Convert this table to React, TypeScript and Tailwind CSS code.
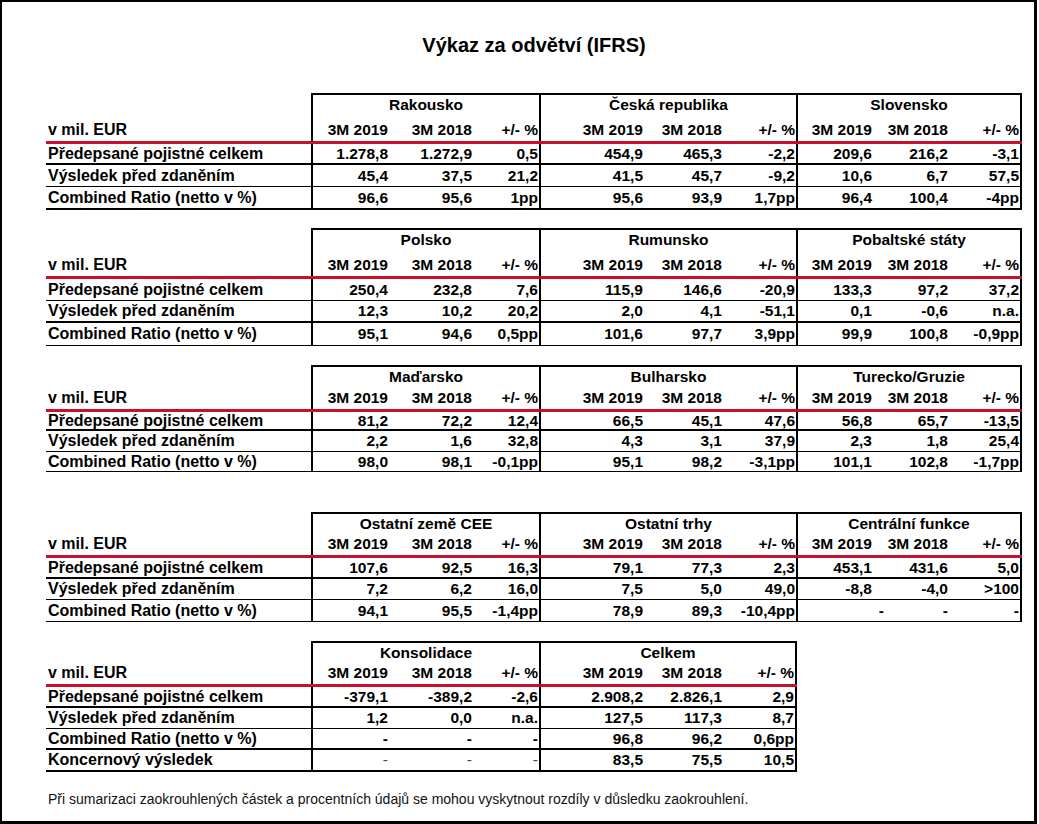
type Group = { box: string; cols: string[] };

const threeGroups: Group[] = [
  { box: "w-[228px] border-l-2", cols: ["w-[77px]", "w-[84px]", "w-[65px]"] },
  { box: "w-[257px] border-l-2", cols: ["w-[104px]", "w-[79px]", "w-[72px]"] },
  { box: "w-[226px] border-l-2 border-r-2", cols: ["w-[76px]", "w-[76px]", "w-[70px]"] },
];

const twoGroups: Group[] = [
  { box: "w-[228px] border-l-2", cols: ["w-[77px]", "w-[84px]", "w-[65px]"] },
  { box: "w-[258px] border-l-2 border-r-2", cols: ["w-[104px]", "w-[79px]", "w-[71px]"] },
];

type Row = { label: string; values: string[]; cls: string; light?: number[]; shift?: number[] };

type Block = {
  top: string;
  header: string;
  groups: Group[];
  names: string[];
  rows: Row[];
};

const L1 = "Předepsané pojistné celkem";
const L2 = "Výsledek před zdaněním";
const L3 = "Combined Ratio (netto v %)";

const blocks: Block[] = [
  {
    top: "mt-[36px]",
    header: "h-[48px]",
    groups: threeGroups,
    names: ["Rakousko", "Česká republika", "Slovensko"],
    rows: [
      { label: L1, cls: "h-[21px] border-b-2", values: ["1.278,8", "1.272,9", "0,5", "454,9", "465,3", "-2,2", "209,6", "216,2", "-3,1"] },
      { label: L2, cls: "h-[22px] border-b", values: ["45,4", "37,5", "21,2", "41,5", "45,7", "-9,2", "10,6", "6,7", "57,5"] },
      { label: L3, cls: "h-[23px] border-b-2", values: ["96,6", "95,6", "1pp", "95,6", "93,9", "1,7pp", "96,4", "100,4", "-4pp"] },
    ],
  },
  {
    top: "mt-[18px]",
    header: "h-[48px]",
    groups: threeGroups,
    names: ["Polsko", "Rumunsko", "Pobaltské státy"],
    rows: [
      { label: L1, cls: "h-[22px] border-b", values: ["250,4", "232,8", "7,6", "115,9", "146,6", "-20,9", "133,3", "97,2", "37,2"] },
      { label: L2, cls: "h-[22px] border-b-2", values: ["12,3", "10,2", "20,2", "2,0", "4,1", "-51,1", "0,1", "-0,6", "n.a."] },
      { label: L3, cls: "h-[23px] border-b", values: ["95,1", "94,6", "0,5pp", "101,6", "97,7", "3,9pp", "99,9", "100,8", "-0,9pp"] },
    ],
  },
  {
    top: "mt-[19px]",
    header: "h-[44px]",
    groups: threeGroups,
    names: ["Maďarsko", "Bulharsko", "Turecko/Gruzie"],
    rows: [
      { label: L1, cls: "h-[19px] border-b-2", values: ["81,2", "72,2", "12,4", "66,5", "45,1", "47,6", "56,8", "65,7", "-13,5"] },
      { label: L2, cls: "h-[21px] border-b", values: ["2,2", "1,6", "32,8", "4,3", "3,1", "37,9", "2,3", "1,8", "25,4"] },
      { label: L3, cls: "h-[20px] border-b", values: ["98,0", "98,1", "-0,1pp", "95,1", "98,2", "-3,1pp", "101,1", "102,8", "-1,7pp"] },
    ],
  },
  {
    top: "mt-[40px]",
    header: "h-[43px]",
    groups: threeGroups,
    names: ["Ostatní země CEE", "Ostatní trhy", "Centrální funkce"],
    rows: [
      { label: L1, cls: "h-[21px] border-b-2", values: ["107,6", "92,5", "16,3", "79,1", "77,3", "2,3", "453,1", "431,6", "5,0"] },
      { label: L2, cls: "h-[21px] border-b", values: ["7,2", "6,2", "16,0", "7,5", "5,0", "49,0", "-8,8", "-4,0", ">100"] },
      { label: L3, cls: "h-[22px] border-b", values: ["94,1", "95,5", "-1,4pp", "78,9", "89,3", "-10,4pp", "-", "-", "-"], shift: [6] },
    ],
  },
  {
    top: "mt-[19px]",
    header: "h-[43px]",
    groups: twoGroups,
    names: ["Konsolidace", "Celkem"],
    rows: [
      { label: L1, cls: "h-[21px] border-b-2", values: ["-379,1", "-389,2", "-2,6", "2.908,2", "2.826,1", "2,9"] },
      { label: L2, cls: "h-[21px] border-b", values: ["1,2", "0,0", "n.a.", "127,5", "117,3", "8,7"] },
      { label: L3, cls: "h-[21px] border-b-2", values: ["-", "-", "-", "96,8", "96,2", "0,6pp"] },
      { label: "Koncernový výsledek", cls: "h-[22px] border-b-2", values: ["-", "-", "-", "83,5", "75,5", "10,5"], light: [0, 1, 2] },
    ],
  },
];

function SegmentTable({ block }: { block: Block }) {
  const { groups, names, rows } = block;
  const width = groups.length === 3 ? "w-[976px]" : "w-[751px]";

  return (
    <div className={`${block.top} ${width} flex flex-col`}>
      <div className={`flex ${block.header}`}>
        <div className="w-[265px] flex items-end">
          <span className="h-[22px] leading-[22px] text-[16px] pl-[2px]">v mil. EUR</span>
        </div>
        {groups.map((g, gi) => (
          <div key={gi} className={`${g.box} border-t-2 border-black flex flex-col justify-between`}>
            <div className="h-[19px] leading-[19px] text-center">{names[gi]}</div>
            <div className="flex h-[22px] leading-[22px]">
              {["3M 2019", "3M 2018", "+/- %"].map((t, ci) => (
                <div key={t} className={`${g.cols[ci]} text-right ${ci === 2 ? "pr-[1px]" : "pr-[2px]"}`}>
                  {t}
                </div>
              ))}
            </div>
          </div>
        ))}
      </div>

      <div className="h-[3px] bg-[#c8102e]" />

      {rows.map((r) => (
        <div key={r.label} className={`flex ${r.cls} border-black`}>
          <div className="w-[265px] flex items-center text-[16px] pl-[2px]">{r.label}</div>
          {groups.map((g, gi) => (
            <div key={gi} className={`${g.box} border-black flex`}>
              {g.cols.map((c, ci) => {
                const idx = gi * 3 + ci;
                const light = r.light?.includes(idx);
                const shift = r.shift?.includes(idx);
                return (
                  <div
                    key={ci}
                    className={`${c} flex items-center justify-end ${ci === 2 ? "pr-[1px]" : "pr-[2px]"} ${
                      light ? "font-normal text-[#444]" : ""
                    }`}
                  >
                    <span className={shift ? "-mr-[12px]" : ""}>{r.values[idx]}</span>
                  </div>
                );
              })}
            </div>
          ))}
        </div>
      ))}
    </div>
  );
}

export default function App() {
  return (
    <div className="w-[1037px] h-[824px] border-l-2 border-t-2 border-r-[3px] border-b-[3px] border-black bg-white text-black font-['Liberation_Sans',Arial,sans-serif]">
      <div className="pl-[44px] flex flex-col">
        <h1 className="w-[976px] pt-[31px] h-[55px] leading-[24px] text-center text-[20px] font-bold">
          Výkaz za odvětví (IFRS)
        </h1>

        <div className="flex flex-col font-bold text-[15.5px]">
          {blocks.map((b) => (
            <SegmentTable key={b.names[0]} block={b} />
          ))}
        </div>

        <p className="mt-[19px] h-[16px] leading-[16px] text-[14px] text-[#111] pl-[2px]">
          Při sumarizaci zaokrouhlených částek a procentních údajů se mohou vyskytnout rozdíly v důsledku zaokrouhlení.
        </p>
      </div>
    </div>
  );
}
